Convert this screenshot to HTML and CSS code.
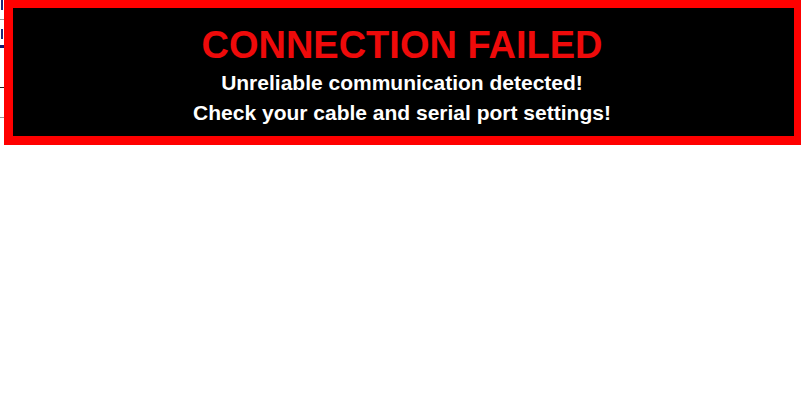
FILE: index.html
```html
<!DOCTYPE html>
<html lang="en">
<head>
    <meta charset="UTF-8">
    <title>Connection failed</title>
    <link rel="stylesheet" href="styles.css">
</head>
<body>
    <div class="app">
        <div class="sidebar">
            <div class="tick tick-blue"></div>
            <div class="rule rule-gray"></div>
            <div class="tick tick-blue"></div>
            <div class="rule rule-navy"></div>
            <div class="spacer"></div>
            <div class="rule rule-black"></div>
            <div class="spacer short"></div>
            <div class="rule rule-gray"></div>
        </div>
    </div>

    <div class="alert">
        <div class="alert-body">
            <div class="alert-title">CONNECTION FAILED</div>
            <div class="alert-line">Unreliable communication detected!</div>
            <div class="alert-line">Check your cable and serial port settings!</div>
        </div>
    </div>
</body>
</html>
```

FILE: styles.css
```css
body {
    margin: 0;
    background-color: #fff;
    font-family: "Liberation Sans", Arial, sans-serif;
}
.app {
    height: 400px;
}
.sidebar {
    width: 4px;
    display: flex;
    flex-direction: column;
}
.tick {
    height: 10px;
    width: 2px;
    margin-left: 1px;
}
.tick-blue {
    background-color: #1b2a7a;
}
.rule {
    height: 1px;
    margin: 9px 0;
}
.rule-gray {
    background-color: #9a9a9a;
}
.rule-navy {
    height: 3px;
    margin: 6px 0 0;
    background-color: #101a70;
}
.rule-black {
    background-color: #222;
}
.spacer {
    height: 30px;
}
.spacer.short {
    height: 11px;
}
.alert {
    position: absolute;
    top: 0;
    left: 4px;
    right: 0;
    border-style: solid;
    border-color: #ff0000;
    border-width: 8px 7px 9px 9px;
    background-color: #000;
}
.alert-body {
    padding: 15px 3px 8px 0;
    text-align: center;
    font-weight: bold;
}
.alert-title {
    color: #ee0a0a;
    font-size: 38px;
    line-height: 45px;
}
.alert-line {
    color: #fff;
    font-size: 21px;
    line-height: 30px;
}
```
